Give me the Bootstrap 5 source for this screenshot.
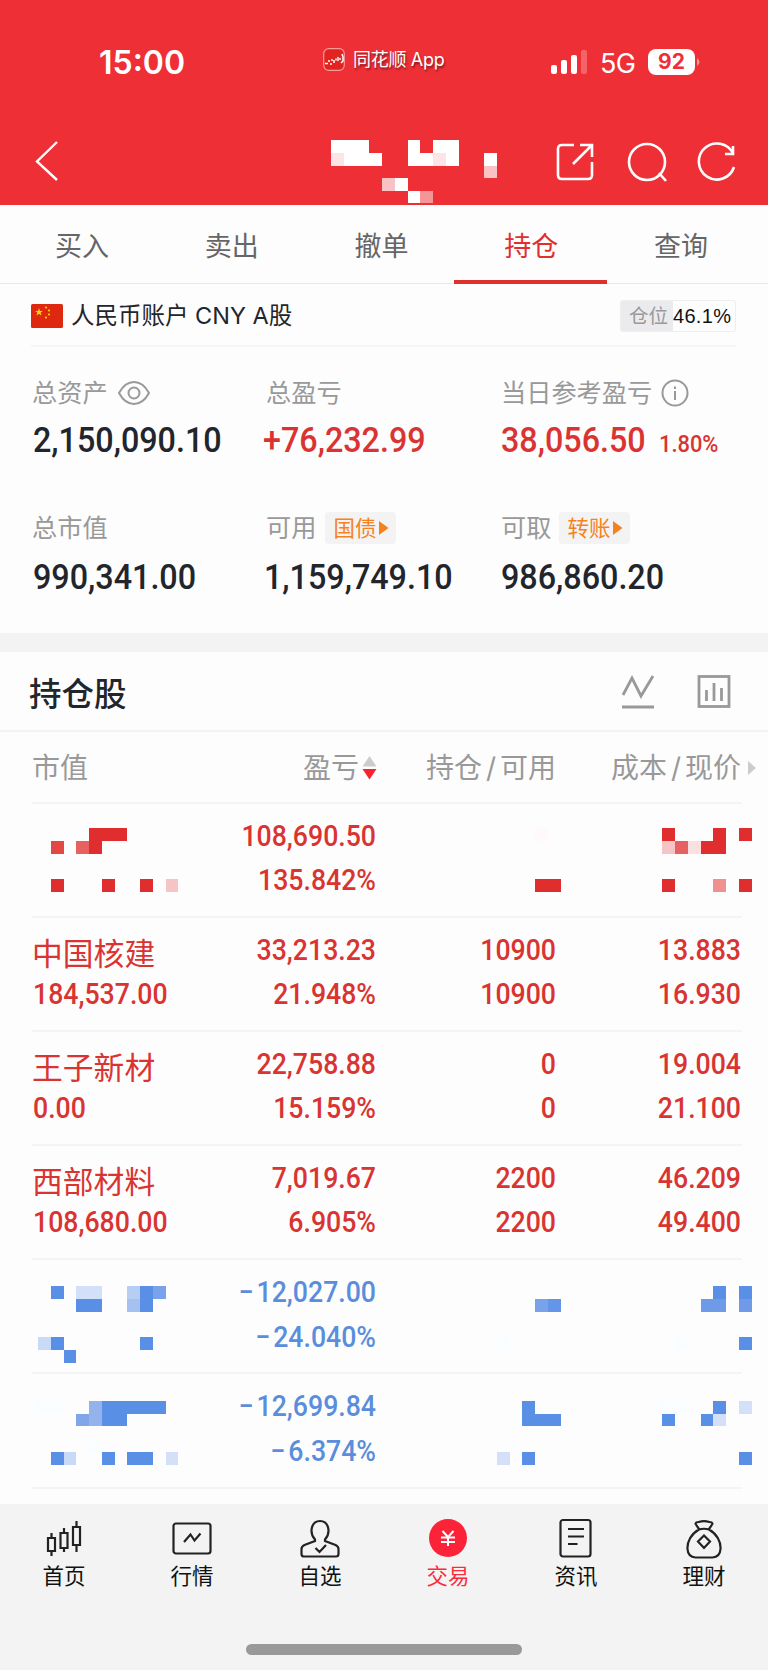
<!DOCTYPE html>
<html lang="zh-CN">
<head>
<meta charset="utf-8">
<meta name="viewport" content="width=device-width, initial-scale=1">
<title>持仓</title>
<link rel="stylesheet" href="https://cdn.jsdelivr.net/npm/bootstrap@5.3.0/dist/css/bootstrap.min.css">
<style>
:root{--up:#d93431;--down:#5a8ddc;--muted:#999}
body{background:#fdfdfd;color:#22252b;font-family:Inter,"Noto Sans CJK SC",sans-serif;width:768px;height:1670px;overflow:hidden;font-weight:400}
svg{display:block;flex:none}
.top-area{background:#ef2f36;height:205px;color:#fff}
.status-bar{height:124px;padding-left:99px;padding-right:68px}
.clock{font-size:32px;font-weight:600;line-height:1;width:224px;padding-top:2px}
.app-name{font-size:18px;line-height:22px;letter-spacing:-.3px;text-shadow:1px 2px 2px rgba(0,0,0,.45)}
.title-bar{height:76px;padding:0 32px 0 33px}
.mosaic{position:absolute;left:0;top:0;pointer-events:none}
.net{font-size:27px;line-height:1;letter-spacing:-.8px}
.battery{width:47px;height:26px;border-radius:8px;background:#fff;color:#ef2f36;font-size:21px;font-weight:700;line-height:26px}
.tabs-line{height:79px;border-bottom:1px solid #e9e9eb;padding:0 12px 0 7px}
.tabs-line a{color:#666;font-size:27px;text-decoration:none;width:149.8px;line-height:83px;text-align:center;position:relative;height:79px}
.tabs-line a.active{color:#e0302e}
.tabs-line a.active::after{content:"";position:absolute;left:-2.500px;width:153.500px;bottom:0;height:4px;background:#e0302e}
.account{height:63px;margin:0 32px 0 31px;border-bottom:2px solid #f5f5f6;font-size:23.5px;padding-top:2px}
.position-rate{width:116px;height:32px;border:1px solid #eee;border-radius:3px;font-size:20px;color:#111;line-height:30px;font-family:"Liberation Sans","Noto Sans CJK SC",sans-serif;letter-spacing:.3px;white-space:nowrap}
.position-rate span{background:#ebebed;color:var(--muted);width:52px;flex:none;height:30px;font-size:19.5px;letter-spacing:0;text-align:center;padding-left:3px}
.num{font-family:Roboto,sans-serif;font-weight:500;display:inline-block;white-space:nowrap;transform:scaleX(.91);transform-origin:left}
.summary{height:286px;padding:23px 0 0 33px}
.summary .grid3{display:grid;grid-template-columns:233px 235px 1fr}
.lbl{font-size:25.2px;line-height:46px;height:46px;color:var(--muted)}
.lbl .zh{margin-left:-1px}
.val{padding-top:1px}
.val .num{font-size:35.5px;line-height:46px}
.val .pct{font-size:24px;font-weight:500;margin-left:-1px}
.mini-btn{background:#f3f3f3;color:#f5821f;border-radius:4px;width:71px;height:32px;font-size:21.5px;line-height:32px;padding-left:8px;gap:3px}
.up{color:var(--up)}.down{color:var(--down)}
.band{height:19px;background:#f3f3f3}
.section-head{height:80px;padding:4px 37px 0 29px;border-bottom:2px solid #f3f3f3}
.section-head h2{font-size:32.5px;font-weight:500;margin:2px 0 0}
.section-head svg{margin-top:-2px}
.cols{display:grid;grid-template-columns:150px 194px 180px 185px;margin-left:32px;width:710px;position:relative;border-bottom:2px solid #f4f4f5}
.cols-head{height:72px;font-size:28px;line-height:72px;color:var(--muted)}
.cols-head>div,.pos>div{text-align:right;white-space:nowrap}
.cols-head>div:first-child,.pos>div:first-child{text-align:left}
.pos{height:114.1px;padding-top:9.500px}
.pos .num{display:block;font-size:29.3px;line-height:44.7px;height:44.7px;transform-origin:right}
.pos>div:first-child .num{transform-origin:left;margin-left:1px}
.minus{margin-right:3px}
.stock{font-size:30.8px;line-height:51px;height:44.7px}
.pos .mosaic{left:-32px}
.dock{height:166px;background:#f3f3f3}
.dock a{width:128px;color:#111;text-decoration:none;font-size:21.5px;text-align:center;line-height:30px}
.dock svg{margin:0 auto}
.dock .on{color:#fb2b3e}
.homebar{width:276px;height:11px;border-radius:6px;background:#999;margin:53px auto 0}
</style>
</head>
<body>
<header class="top-area position-relative">
  <div class="status-bar d-flex align-items-center">
    <div class="clock">15:00</div>
    <svg width="22" height="23" viewBox="0 0 22 23" style="margin-top:-6px"><rect x=".7" y=".7" width="20.6" height="21.6" rx="5" fill="#e2231f" stroke="#f79a9c" stroke-width="1.2"/><path d="M2 15.500h3M5 13h2M7 16h2M9 11v2M11 12v3M13 10.500v2M15 9v4M17 10v2M19 6l1 3v4l-2 2" stroke="#fff" stroke-width="1.5" fill="none"/></svg>
    <div class="app-name" style="margin:-4px 0 0 8px">同花顺 App</div>
    <div class="ms-auto d-flex align-items-center">
      <svg width="37" height="24" fill="#fff"><rect x="0" y="15" width="6" height="9" rx="2"/><rect x="10" y="10" width="6" height="14" rx="2"/><rect x="20" y="5" width="6" height="19" rx="2"/><rect x="30" y="0" width="6" height="24" rx="2" opacity=".25"/></svg>
      <div class="net" style="margin:3px 13px 0 12px">5G</div>
      <div class="battery text-center">92</div>
      <svg width="5" height="8"><path d="M2 0q5 4 0 8z" fill="#fff" opacity=".5"/></svg>
    </div>
  </div>
  <div class="title-bar d-flex align-items-center">
    <svg width="26" height="42" fill="none" stroke="#fff" stroke-width="2.4" style="margin-top:-2px"><path d="M24 2L4 21.500 24 40"/></svg>
    <div class="ms-auto d-flex">
      <svg width="38" height="40" viewBox="0 0 38 40" fill="none" stroke="#fff" stroke-width="2.600"><path d="M18 3H6Q2 3 2 7v26q0 4 4 4h26q4 0 4-4V20M24 3h12v12M36 3L17 22"/></svg>
      <svg width="40" height="40" viewBox="0 0 40 40" fill="none" stroke="#fff" stroke-width="2.600" style="margin-left:33px"><circle cx="20" cy="20" r="18"/><path d="M32 31l7 8"/></svg>
      <svg width="40" height="40" viewBox="0 0 40 40" fill="none" stroke="#fff" stroke-width="2.600" style="margin-left:29px"><path d="M37 11.500A18 18 0 1 0 38 25M37 4v8h-8"/></svg>
    </div>
  </div>
  <svg class="mosaic" width="768" height="205" shape-rendering="crispEdges"><g transform="scale(12.74)" fill="#fff"><path d="M26 11h3v1h1v1h-4zM32 11h1v1h1v-1h2v2h-4zM38 12h1v1h-1zM31 14h1v1h-1zM32 15h1v.95h-1z"/><path fill="#fde5e7" d="M26 12h1v1h-1zM34 12h1v1h-1z"/><path fill="#f9c2c5" d="M38 13h1v1h-1zM30 14h1v1h-1z"/><path fill="#f69598" d="M33 15h1v.95h-1z"/></g></svg>
</header>

<nav class="tabs-line d-flex">
  <a href="#">买入</a><a href="#">卖出</a><a href="#">撤单</a><a href="#" class="active">持仓</a><a href="#">查询</a>
</nav>

<section class="account d-flex align-items-center">
  <svg width="32" height="24" viewBox="0 0 32 24"><rect width="32" height="24" rx="1.500" fill="#de2910"/><path fill="#ffde00" d="M8 4.200l1 2.700h2.900l-2.300 1.700.9 2.800L8 9.700l-2.500 1.700.9-2.800-2.300-1.700H7z"/><g fill="#ffde00"><circle cx="15" cy="3.600" r="1"/><circle cx="18" cy="6.500" r="1"/><circle cx="18" cy="10.500" r="1"/><circle cx="15" cy="13.600" r="1"/></g></svg>
  <div style="margin-left:8px">人民币账户 CNY A股</div>
  <div class="position-rate ms-auto d-flex"><span>仓位</span>46.1%</div>
</section>

<section class="summary">
  <div class="grid3">
    <div>
      <div class="lbl d-flex align-items-center"><div class="zh">总资产</div><svg style="margin-left:9px" width="34" height="26" viewBox="0 0 34 26" fill="none" stroke="#999" stroke-width="2"><path d="M2 13Q8 2 17 2t15 11Q26 24 17 24T2 13z"/><circle cx="17" cy="13" r="5.500"/></svg></div>
      <div class="val"><span class="num">2,150,090.10</span></div>
    </div>
    <div>
      <div class="lbl">总盈亏</div>
      <div class="val up" style="margin-left:-3px"><span class="num">+76,232.99</span></div>
    </div>
    <div>
      <div class="lbl d-flex align-items-center">当日参考盈亏<svg style="margin-left:9px" width="28" height="28" fill="none" stroke="#999" stroke-width="2"><circle cx="14" cy="14" r="12.500"/><path d="M14 12v9M14 7.500v2.500"/></svg></div>
      <div class="val up"><span class="num">38,056.50</span><span class="num pct">1.80%</span></div>
    </div>
  </div>
  <div class="grid3" style="margin-top:38px">
    <div>
      <div class="lbl"><div class="zh">总市值</div></div>
      <div class="val" style="margin-top:2px"><span class="num">990,341.00</span></div>
    </div>
    <div>
      <div class="lbl d-flex align-items-center">可用<div class="mini-btn d-flex align-items-center" style="margin-left:9px">国债<svg width="10" height="14"><path fill="#f5821f" d="M0 0l9.500 7L0 14z"/></svg></div></div>
      <div class="val" style="margin-top:2px;margin-left:-2px"><span class="num">1,159,749.10</span></div>
    </div>
    <div>
      <div class="lbl d-flex align-items-center">可取<div class="mini-btn d-flex align-items-center" style="margin-left:8px">转账<svg width="10" height="14"><path fill="#f5821f" d="M0 0l9.500 7L0 14z"/></svg></div></div>
      <div class="val" style="margin-top:2px"><span class="num">986,860.20</span></div>
    </div>
  </div>
</section>

<div class="band"></div>

<section class="section-head d-flex align-items-center">
  <h2>持仓股</h2>
  <svg class="ms-auto" width="34" height="36" fill="none" stroke="#999" stroke-width="2.800"><path d="M2 21L11 4l9 18L32 2M1 33h32"/></svg>
  <svg style="margin-left:42px" width="34" height="36" fill="none" stroke="#999" stroke-width="2.800"><rect x="2" y="2.500" width="30" height="30"/><path d="M9.500 16v11M17 9v18M24.500 14v13"/></svg>
</section>

<div class="cols cols-head">
  <div>市值</div>
  <div class="d-flex justify-content-end align-items-center">盈亏<svg style="margin:0 -1px 0 3px" width="15" height="24"><path fill="#ccc" d="M7.500 0L14.500 10.500H.5z"/><path fill="#f9232e" d="M7.500 23.500L14.500 13H.5z"/></svg></div>
  <div><span>持仓</span><span class="px-1">/</span><span>可用</span></div>
  <div><span>成本</span><span class="px-1">/</span><span>现价</span><svg class="position-absolute" style="left:716px;top:28px" width="9" height="16"><path fill="#ccc" d="M0 1l8 7-8 7z"/></svg></div>
</div>

<div class="cols pos up">
  <div></div>
  <div><span class="num">108,690.50</span><span class="num">135.842%</span></div>
  <div></div><div></div>
  <svg class="mosaic" width="768" height="112" shape-rendering="crispEdges"><g transform="translate(0 -804) scale(12.74)" fill="#e02d2d"><path d="M7 65h3v1H8v1H7zM4 69h1v1H4zM8 69h1v1H8zM11 69h1v1h-1zM42 69h2v1h-2zM52 65h1v1h-1zM56 65h1v2h-2v-1h1zM58 65h1v1h-1zM52 69h1v1h-1zM58 69h1v1h-1z"/><path fill="#e54646" d="M4 66h1v1H4z"/><path fill="#e66262" d="M6 66h1v1H6zM53 66h1v1h-1z"/><path fill="#f7c4c5" d="M13 69h1v1h-1zM52 66h1v1h-1z"/><path fill="#fbe0e0" d="M54 66h1v1h-1z"/><path fill="#f09090" d="M56 69h1v1h-1z"/><path fill="#fff9fa" d="M42 65h1v1h-1z"/></g></svg>
</div>
<div class="cols pos up">
  <div><div class="stock">中国核建</div><span class="num">184,537.00</span></div>
  <div><span class="num">33,213.23</span><span class="num">21.948%</span></div>
  <div><span class="num">10900</span><span class="num">10900</span></div>
  <div><span class="num">13.883</span><span class="num">16.930</span></div>
</div>
<div class="cols pos up">
  <div><div class="stock">王子新材</div><span class="num">0.00</span></div>
  <div><span class="num">22,758.88</span><span class="num">15.159%</span></div>
  <div><span class="num">0</span><span class="num">0</span></div>
  <div><span class="num">19.004</span><span class="num">21.100</span></div>
</div>
<div class="cols pos up">
  <div><div class="stock">西部材料</div><span class="num">108,680.00</span></div>
  <div><span class="num">7,019.67</span><span class="num">6.905%</span></div>
  <div><span class="num">2200</span><span class="num">2200</span></div>
  <div><span class="num">46.209</span><span class="num">49.400</span></div>
</div>
<div class="cols pos down">
  <div></div>
  <div><span class="num"><span class="minus">−</span>12,027.00</span><span class="num"><span class="minus">−</span>24.040%</span></div>
  <div></div><div></div>
  <svg class="mosaic" width="768" height="112" shape-rendering="crispEdges"><g transform="translate(0 -1260.400) scale(12.74)" fill="#5a8fe6"><path d="M4 101h1v1H4zM11 101h1v2h-1zM6 102h2v1H6zM4 105h1v1H4zM11 105h1v1h-1zM5 106h1v1H5zM56 101h1v1h-1zM58 101h1v1h-1zM58 105h1v1h-1z"/><path fill="#d3e0f9" d="M6 101h2v1H6z"/><path fill="#b6cdf4" d="M10 101h1v1h-1z"/><path fill="#a5c0f1" d="M10 102h1v1h-1z"/><path fill="#78a2ea" d="M12 101h1v1h-1zM42 102h1v1h-1z"/><path fill="#c9daf8" d="M3 105h1v1H3z"/><path fill="#6395e8" d="M43 102h1v1h-1z"/><path fill="#6f9ae8" d="M55 102h2v1h-2zM58 102h1v1h-1z"/><path fill="#f9fdff" d="M39 105h1v1h-1zM53 105h1v1h-1z"/></g></svg>
</div>
<div class="cols pos down">
  <div></div>
  <div><span class="num"><span class="minus">−</span>12,699.84</span><span class="num"><span class="minus">−</span>6.374%</span></div>
  <div></div><div></div>
  <svg class="mosaic" width="768" height="112" shape-rendering="crispEdges"><g transform="translate(0 -1374.500) scale(12.74)" fill="#5a8fe6"><path d="M8 110h5v1h-3v1H8zM4 114h1v1H4zM8 114h1v1H8zM10 114h2v1h-2zM41 110h1v1h2v1h-3zM41 114h1v1h-1zM52 111h1v1h-1zM56 110h1v1h-1zM55 111h1v1h-1zM58 114h1v1h-1z"/><path fill="#94b3ec" d="M7 110h1v2H7z"/><path fill="#80a6ea" d="M6 111h1v1H6z"/><path fill="#c8daf7" d="M5 114h1v1H5z"/><path fill="#d3e0f8" d="M13 114h1v1h-1zM39 114h1v1h-1zM58 110h1v1h-1zM56 111h1v1h-1z"/><path fill="#f9fdff" d="M3 110h2v1H3zM7 113h1v1H7zM52 110h2v1h-2z"/></g></svg>
</div>

<footer class="dock position-absolute start-0" style="top:1504px;width:768px">
  <div class="d-flex" style="padding-top:13px">
    <a href="#"><svg width="40" height="44" viewBox="0 0 40 44" fill="none" stroke="#222" stroke-width="2.200"><path d="M4 21h7v13H4zM7.500 16v5M7.500 34v5M16.500 16h7v15h-7zM20 11v5M20 31v4M29 10h7v18h-7zM32.500 4v6M32.500 28v7"/></svg>首页</a>
    <a href="#"><svg width="40" height="44" viewBox="0 0 40 44" fill="none" stroke="#222" stroke-width="2.200"><rect x="1.500" y="6.500" width="37" height="30" rx="2.500"/><path d="M12 25l6.500-7.500 4 6 6-7"/></svg>行情</a>
    <a href="#"><svg width="40" height="44" viewBox="0 0 40 44" fill="none" stroke="#222" stroke-width="2.200"><path d="M15 22.500C9 16 11 4 20 4s11 12 5 18.500V24l10.500 4q3 1.500 3 4v5q0 2.500-2.500 2.500H4q-2.500 0-2.500-2.500v-5q0-2.500 3-4L15 24zM15.500 31l4 4 6.500-7"/></svg>自选</a>
    <a href="#" class="on"><svg width="40" height="44" viewBox="0 0 40 44"><circle cx="20" cy="21" r="19" fill="#fb2338"/><path d="M14.500 14l5.500 6 5.500-6M13 20.500h14M13 25h14M20 20v9" fill="none" stroke="#fff" stroke-width="2"/></svg>交易</a>
    <a href="#"><svg width="40" height="44" viewBox="0 0 40 44" fill="none" stroke="#222" stroke-width="2.200"><rect x="4.500" y="3" width="30" height="36.500" rx="2.500"/><path d="M12 12h16M12 19.500h16M12 27h9.500"/></svg>资讯</a>
    <a href="#"><svg width="40" height="44" viewBox="0 0 40 44" fill="none" stroke="#222" stroke-width="2.200"><path d="M15 12Q12 8 11.500 6.500q.5-1.500 3-1.500 3-.8 5.500-.8t5.500.8q2.500 0 3 1.500Q28 8 25 12M15 12.500q5-1.500 10 0C33 17 37 25 36.500 32q-.5 8-8 8.500h-17q-7.500-.5-8-8.500C3 25 7 17 15 12.500zM20 18.500l6 6-6 6.500-6-6.500z"/></svg>理财</a>
  </div>
  <div class="homebar"></div>
</footer>
<script src="https://cdn.jsdelivr.net/npm/bootstrap@5.3.0/dist/js/bootstrap.bundle.min.js"></script>
</body>
</html>
